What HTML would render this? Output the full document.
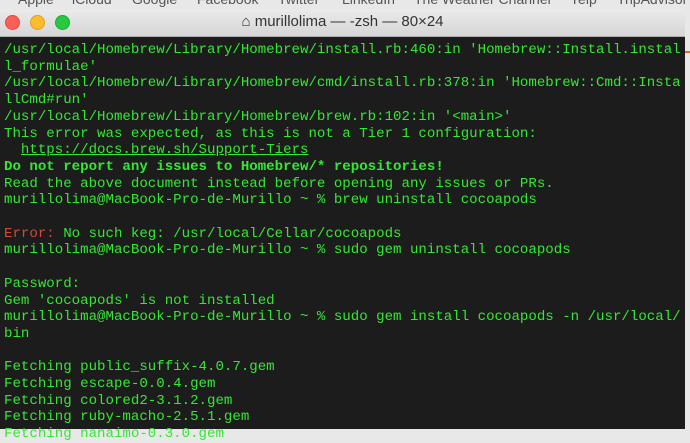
<!DOCTYPE html>
<html><head><meta charset="utf-8"><style>
body{margin:0;width:690px;height:429px;overflow:hidden;background:#e8e8e8;position:relative;font-family:"Liberation Sans",sans-serif}
.menu{position:absolute;top:-9px;left:0;width:690px;height:12px;font-size:14px;color:#555;white-space:nowrap}
.menu span{position:absolute}
.title{position:absolute;top:9px;left:0;width:685px;height:27px;background:linear-gradient(#ebebeb,#d6d6d6);border-top-right-radius:6px;border-bottom:1px solid #b0b0b0}
.dot{position:absolute;top:6px;width:13px;height:13px;border-radius:50%}
.tt{position:absolute;top:4px;left:0;width:685px;text-align:center;font-size:15px;color:#333}
.term{position:absolute;top:37px;left:0;width:685px;height:392px;background:#1c1c1c}
pre{margin:0;position:absolute;top:5px;left:4px;font-family:"Liberation Mono",monospace;font-size:14.1px;line-height:16.7px;color:#33e833}
.r{color:#d04a3a}.b{font-weight:bold}.u{text-decoration:underline}
.edge{position:absolute;left:685px;top:51px;width:5px;height:2px;background:#d8702a}
</style></head><body>
<div class="menu"><span style="left:18px">Apple</span><span style="left:72px">iCloud</span><span style="left:132px">Google</span><span style="left:197px">Facebook</span><span style="left:278px">Twitter</span><span style="left:342px">LinkedIn</span><span style="left:414px">The Weather Channel</span><span style="left:570px">Yelp</span><span style="left:617px">TripAdvisor</span></div>
<div class="title">
<div class="dot" style="left:5px;background:#fc5f57;border:0.5px solid #de4a42"></div>
<div class="dot" style="left:30px;background:#fdbc2e;border:0.5px solid #dea023"></div>
<div class="dot" style="left:55px;background:#28c840;border:0.5px solid #1ea932"></div>
<div class="tt">⌂ murillolima — -zsh — 80×24</div>
</div>
<div class="edge"></div>
<div class="term"><pre>/usr/local/Homebrew/Library/Homebrew/install.rb:460:in 'Homebrew::Install.instal
l_formulae'
/usr/local/Homebrew/Library/Homebrew/cmd/install.rb:378:in 'Homebrew::Cmd::Insta
llCmd#run'
/usr/local/Homebrew/Library/Homebrew/brew.rb:102:in '&lt;main&gt;'
This error was expected, as this is not a Tier 1 configuration:
  <span class="u">https://docs.brew.sh/Support-Tiers</span>
<span class="b">Do not report any issues to Homebrew/* repositories!</span>
Read the above document instead before opening any issues or PRs.
murillolima@MacBook-Pro-de-Murillo ~ % brew uninstall cocoapods

<span class="r">Error:</span> No such keg: /usr/local/Cellar/cocoapods
murillolima@MacBook-Pro-de-Murillo ~ % sudo gem uninstall cocoapods

Password:
Gem 'cocoapods' is not installed
murillolima@MacBook-Pro-de-Murillo ~ % sudo gem install cocoapods -n /usr/local/
bin

Fetching public_suffix-4.0.7.gem
Fetching escape-0.0.4.gem
Fetching colored2-3.1.2.gem
Fetching ruby-macho-2.5.1.gem
Fetching nanaimo-0.3.0.gem</pre></div>
</body></html>
